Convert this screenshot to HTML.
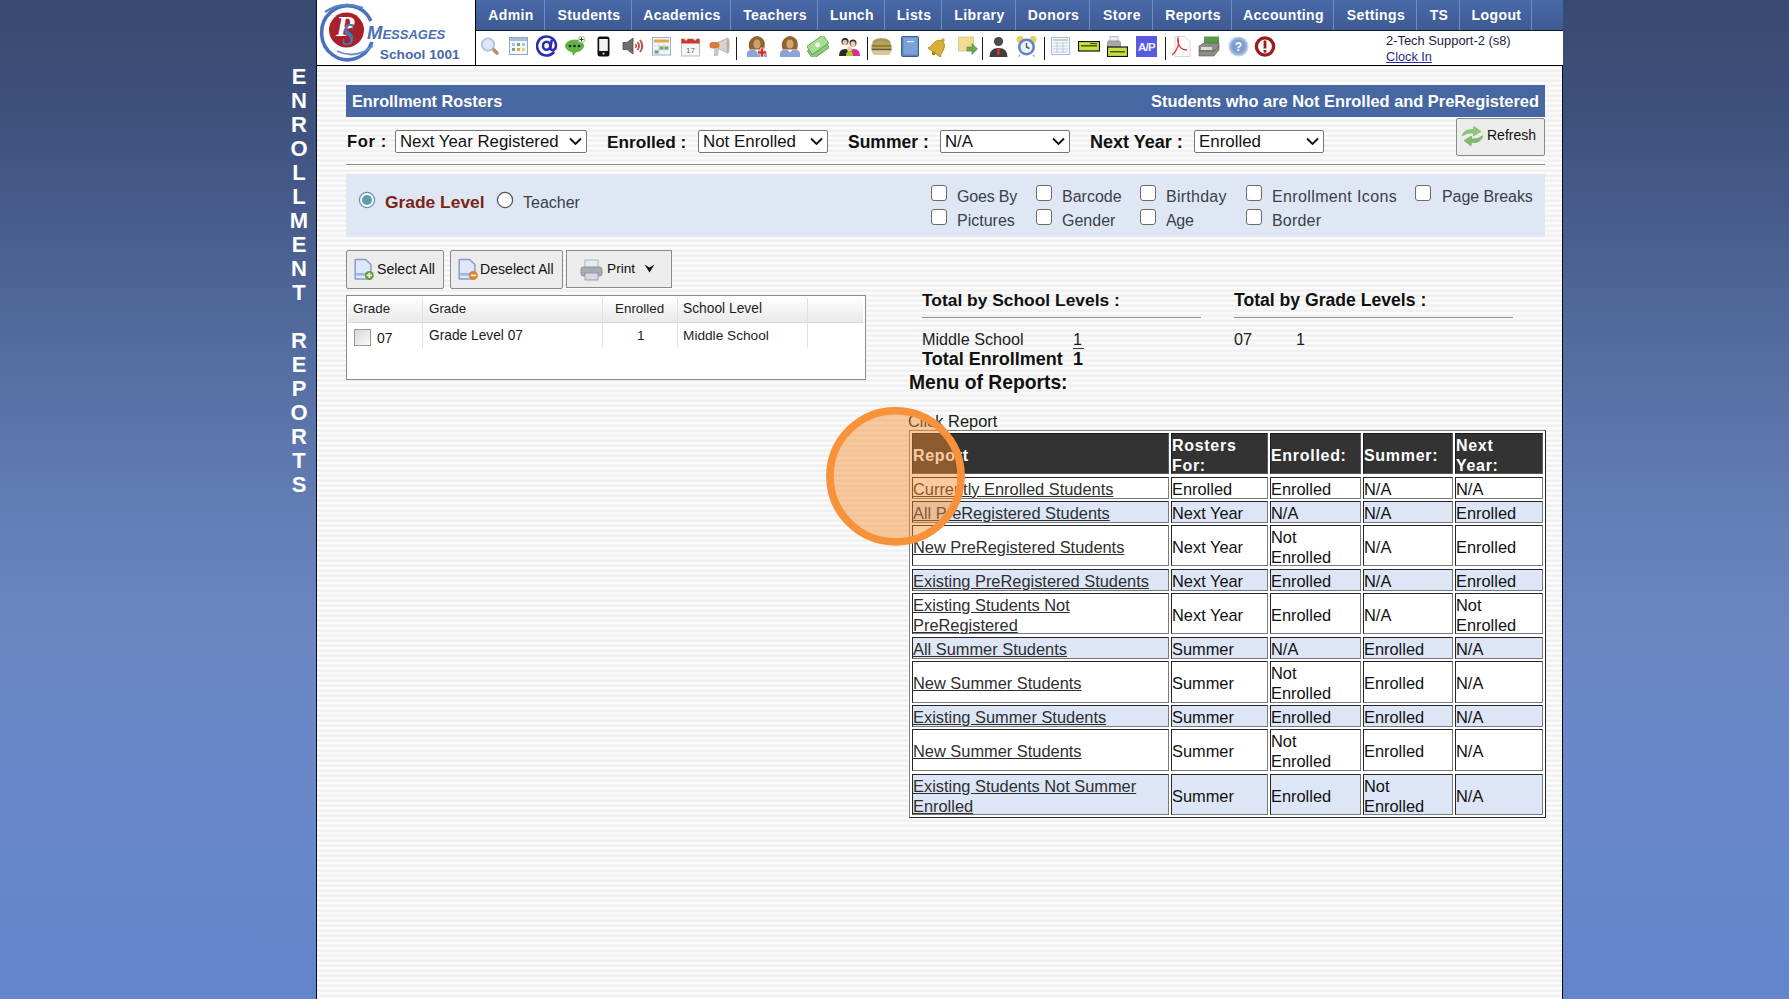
<!DOCTYPE html>
<html><head><meta charset="utf-8">
<style>
html,body{margin:0;padding:0;}
body{width:1789px;height:999px;overflow:hidden;position:relative;font-family:"Liberation Sans",sans-serif;
background:linear-gradient(to bottom,#364a72 0px,#3e527e 125px,#4a6090 250px,#5670a4 375px,#627cb4 500px,#6a86c2 625px,#6a88c8 750px,#6787cc 875px,#6383cb 999px);}
.a{position:absolute;white-space:nowrap;}
#vt{position:absolute;left:288px;top:65px;width:22px;text-align:center;color:#fff;font-weight:bold;font-size:22px;line-height:24px;}
#cont{position:absolute;left:316px;top:0;width:1245px;height:999px;border-left:1px solid #0a0a1a;border-right:1px solid #0a0a1a;
background:repeating-linear-gradient(to bottom,#efefef 0px,#f2f2f2 1.5px,#fbfbfb 2.5px,#fbfbfb 4px,#efefef 5px);}
#logo{position:absolute;left:317px;top:0;width:158px;height:65px;background:#fff;}
#hdrline{position:absolute;left:317px;top:65px;width:1245px;height:1px;background:#000;}
#nav{position:absolute;left:475px;top:0;width:1087px;height:30px;border-left:1px solid #000;
background:linear-gradient(to bottom,#4969a7 0%,#42609c 60%,#3d5a90 100%);}
#navline{position:absolute;left:475px;top:30px;width:1087px;height:1px;background:#101828;}
#icons{position:absolute;left:475px;top:31px;width:1087px;height:34px;background:#fff;border-left:1px solid #000;}
.tab{position:absolute;top:0;height:30px;line-height:30px;text-align:center;color:#fff;font-weight:bold;font-size:14px;letter-spacing:0.4px;}
.cell{box-sizing:border-box;border:1px solid;border-color:#262626 #7a7a7a #7a7a7a #262626;padding-top:2px;display:flex;align-items:center;font-size:16.4px;color:#111;line-height:20px;white-space:nowrap;}
.ci{padding-left:0;}
.lnk{color:#2e2e2e;text-decoration:underline;}
.sep{position:absolute;top:0;width:1px;height:30px;background:#6f8cc4;}
</style></head>
<body>
<div id="vt">E<br>N<br>R<br>O<br>L<br>L<br>M<br>E<br>N<br>T<br>&nbsp;<br>R<br>E<br>P<br>O<br>R<br>T<br>S</div>
<div id="cont"></div>
<div id="logo"></div>
<div id="nav"></div>
<div id="icons"></div>
<div id="navline"></div>
<div id="hdrline"></div>
<div class="tab" style="left:477px;width:68px">Admin</div>
<div class="tab" style="left:546px;width:86px">Students</div>
<div class="tab" style="left:633px;width:98px">Academics</div>
<div class="tab" style="left:732px;width:86px">Teachers</div>
<div class="tab" style="left:819px;width:66px">Lunch</div>
<div class="tab" style="left:886px;width:56px">Lists</div>
<div class="tab" style="left:943px;width:73px">Library</div>
<div class="tab" style="left:1017px;width:73px">Donors</div>
<div class="tab" style="left:1091px;width:62px">Store</div>
<div class="tab" style="left:1154px;width:78px">Reports</div>
<div class="tab" style="left:1233px;width:101px">Accounting</div>
<div class="tab" style="left:1335px;width:82px">Settings</div>
<div class="tab" style="left:1418px;width:42px">TS</div>
<div class="tab" style="left:1461px;width:71px">Logout</div>
<div class="sep" style="left:544px"></div>
<div class="sep" style="left:631px"></div>
<div class="sep" style="left:730px"></div>
<div class="sep" style="left:817px"></div>
<div class="sep" style="left:884px"></div>
<div class="sep" style="left:941px"></div>
<div class="sep" style="left:1015px"></div>
<div class="sep" style="left:1089px"></div>
<div class="sep" style="left:1152px"></div>
<div class="sep" style="left:1231px"></div>
<div class="sep" style="left:1333px"></div>
<div class="sep" style="left:1416px"></div>
<div class="sep" style="left:1459px"></div>
<div class="sep" style="left:1531px"></div>
<svg class="a" style="left:317px;top:0" width="158" height="65" viewBox="0 0 158 65">
<path d="M54,21 A26,27 0 1 0 55,42" fill="none" stroke="#4a72b8" stroke-width="3.6"/>
<path d="M8,12 Q25,0 46,8" fill="none" stroke="#5a82c4" stroke-width="2.2"/>
<path d="M20,51 Q38,60 56,46" fill="none" stroke="#6a90cc" stroke-width="1.8"/>
<circle cx="29.5" cy="30" r="17.5" fill="#a8222a"/>
<text x="19" y="36" font-family="Liberation Serif" font-style="italic" font-weight="bold" font-size="30" fill="#fff">P</text>
<text transform="translate(25.5,45) scale(0.72,1)" x="0" y="0" font-family="Liberation Serif" font-style="italic" font-weight="bold" font-size="31" fill="#4a74b8">S</text>
<text x="50" y="39.4" font-family="Liberation Sans" font-style="italic" font-weight="bold" fill="#4a70b2"><tspan font-size="18.5">M</tspan><tspan font-size="13">ESSAGES</tspan></text>
<text x="62.8" y="58.6" font-family="Liberation Sans" font-weight="bold" font-size="13.7" fill="#4a68a8">School 1001</text>
</svg>
<div class="a" style="left:1386px;top:33px;font-size:12.9px;color:#1c1c44;line-height:15px">2-Tech Support-2 (s8)</div>
<div class="a" style="left:1386px;top:50px;font-size:12.7px;color:#2828a0;line-height:15px;text-decoration:underline">Clock In</div>
<!--ICONS-->
<svg class="a" style="left:480px;top:36px" width="20" height="20" viewBox="0 0 20 20"><line x1="12" y1="12" x2="17" y2="17" stroke="#b89060" stroke-width="3.5" stroke-linecap="round"/><circle cx="8" cy="8.5" r="6.2" fill="#dbe6f6" stroke="#a9bcd8" stroke-width="1.6"/></svg>
<svg class="a" style="left:509px;top:37px" width="19" height="18" viewBox="0 0 19 18"><rect x="0.5" y="0.5" width="18" height="17" fill="#f4f7fc" stroke="#8ea6cc"/><rect x="1" y="1" width="17" height="3" fill="#a8bce0"/><rect x="3" y="6" width="3" height="3" fill="#a8c4e8"/><rect x="8" y="6" width="3" height="3" fill="#7aa860"/><rect x="13" y="6" width="3" height="3" fill="#a8c4e8"/><rect x="3" y="11" width="3" height="3" fill="#7aa860"/><rect x="8" y="11" width="3" height="3" fill="#e0a050"/><rect x="13" y="11" width="3" height="3" fill="#e8d070"/></svg>
<svg class="a" style="left:536px;top:35px" width="22" height="22" viewBox="0 0 22 22"><path d="M17.5,17.5 A9.5,9.5 0 1 1 20,10 Q20,15 16.5,15 Q14,15 14.5,12 L15.5,6" fill="none" stroke="#2c2cb4" stroke-width="2.6" stroke-linecap="round"/><ellipse cx="10.6" cy="10.8" rx="3.6" ry="4" fill="none" stroke="#2c2cb4" stroke-width="2.6"/></svg>
<svg class="a" style="left:565px;top:36px" width="21" height="20" viewBox="0 0 21 20"><ellipse cx="9.5" cy="10" rx="9.5" ry="6.5" fill="#62b244"/><path d="M7,15 L8,20 L12,15 Z" fill="#62b244"/><circle cx="5" cy="10" r="1.3" fill="#123"/><circle cx="9.5" cy="10" r="1.3" fill="#123"/><circle cx="14" cy="10" r="1.3" fill="#123"/><circle cx="16.5" cy="3.5" r="3.3" fill="#eef6ea" stroke="#8ac070" stroke-width="0.8"/><path d="M16.5,1.5 v4 M14.5,3.5 h4" stroke="#334" stroke-width="1"/></svg>
<svg class="a" style="left:597px;top:36px" width="13" height="21" viewBox="0 0 13 21"><rect x="0.5" y="0.5" width="12" height="20" rx="2.5" fill="#111"/><rect x="2.2" y="3" width="8.6" height="12" fill="#f2f2f2"/><circle cx="6.5" cy="17.6" r="1.1" fill="#ddd"/></svg>
<svg class="a" style="left:622px;top:36px" width="23" height="20" viewBox="0 0 23 20"><path d="M1,6.5 h4 l6,-4.5 v16 l-6,-4.5 h-4 z" fill="#6e6e6e" stroke="#4a4a4a" stroke-width="0.8"/><path d="M13.5,8 q1.5,2 0,4" fill="none" stroke="#c84848" stroke-width="1.6"/><path d="M15.5,6 q3,4 0,8" fill="none" stroke="#c84848" stroke-width="1.8"/><path d="M18,4 q4.5,6 0,12" fill="none" stroke="#c05050" stroke-width="2"/></svg>
<svg class="a" style="left:652px;top:37px" width="19" height="19" viewBox="0 0 19 19"><rect x="0.5" y="0.5" width="18" height="17.5" fill="#f4f8fc" stroke="#98acd4"/><rect x="2" y="2.5" width="15" height="3" fill="#f0a040"/><path d="M2,9 h15 M2,13 h15 M7,6 v11 M12,6 v11" stroke="#c8d4e4" stroke-width="0.8"/><rect x="7.5" y="9.5" width="4" height="3" fill="#6aa860"/><rect x="12.5" y="9.5" width="4" height="3" fill="#6aa860"/><rect x="2.5" y="13.5" width="4" height="3" fill="#6aa860"/></svg>
<svg class="a" style="left:681px;top:36px" width="19" height="21" viewBox="0 0 19 21"><rect x="0.5" y="3" width="18" height="17" fill="#f6f6f6" stroke="#bbb"/><rect x="0.5" y="3" width="18" height="4.5" fill="#c43a2e"/><circle cx="5" cy="3" r="1.5" fill="#eee"/><circle cx="14" cy="3" r="1.5" fill="#eee"/><text x="9.5" y="17" text-anchor="middle" font-family="Liberation Sans" font-size="8" fill="#666">17</text></svg>
<svg class="a" style="left:709px;top:36px" width="21" height="21" viewBox="0 0 21 21"><path d="M9,6.5 L19,2 L19,17 L9,12.5 Z" fill="#d8d4cc" stroke="#aaa39a" stroke-width="0.8"/><ellipse cx="19" cy="9.5" rx="1.6" ry="7.5" fill="#b8b0a4"/><rect x="0.5" y="6" width="10" height="6.5" rx="3" fill="#d87a38"/><path d="M5,12.5 l0,7.5 h4 l1,-7" fill="#c8c8c8"/></svg>
<div class="a" style="left:736px;top:37px;width:1px;height:23px;background:#1a1a1a"></div>
<svg class="a" style="left:746px;top:36px" width="22" height="21" viewBox="0 0 22 21"><path d="M1,21 L1,17.5 Q1,14 5,14 L17,14 Q21,14 21,17.5 L21,21 Z" fill="#8aa4d8"/><path d="M3.5,13.5 Q1.5,7 5,3 Q8,0 11,0 Q14,0 17,3 Q20,7 18,13.5 Z" fill="#94602c"/><ellipse cx="11" cy="8" rx="3.6" ry="4.6" fill="#c8a070"/><path d="M9,14 l2,2 l2,-2" fill="#fff"/><path d="M14.5,12 h3 v3 h3 v3 h-3 v3 h-3 v-3 h-3 v-3 h3 z" fill="#dd2a20" stroke="#fff" stroke-width="0.6"/></svg>
<svg class="a" style="left:779px;top:36px" width="22" height="21" viewBox="0 0 22 21"><path d="M1,21 L1,17.5 Q1,14 5,14 L17,14 Q21,14 21,17.5 L21,21 Z" fill="#8aa4d8"/><path d="M3.5,13.5 Q1.5,7 5,3 Q8,0 11,0 Q14,0 17,3 Q20,7 18,13.5 Z" fill="#94602c"/><ellipse cx="11" cy="8" rx="3.6" ry="4.6" fill="#d0a478"/><path d="M8.5,14 l2.5,2.5 l2.5,-2.5" fill="#fff"/></svg>
<svg class="a" style="left:807px;top:36px" width="22" height="21" viewBox="0 0 22 21"><g transform="rotate(-35 11 11)"><rect x="0" y="8" width="20" height="10" fill="#8ccc78" stroke="#5a9a48" stroke-width="0.8"/><rect x="2" y="4" width="20" height="10" fill="#a8dc90" stroke="#5a9a48" stroke-width="0.8"/><circle cx="12" cy="9" r="2.5" fill="#e8f4e0"/></g></svg>
<svg class="a" style="left:839px;top:36px" width="21" height="21" viewBox="0 0 21 21"><circle cx="6" cy="5.5" r="3.5" fill="#222"/><circle cx="14" cy="7" r="3.5" fill="#4a2a22"/><ellipse cx="6" cy="6.5" rx="2.5" ry="2.8" fill="#e8c0a0"/><ellipse cx="14" cy="8" rx="2.5" ry="2.8" fill="#f0c8b0"/><path d="M0,20 q0,-7 6,-7 q5,0 5,7 z" fill="#2a2a2a"/><path d="M9,20 q0,-7 6,-7 q6,0 6,7 z" fill="#d03090"/><circle cx="10.5" cy="13" r="2.5" fill="#e8c8a0"/><path d="M7,20 q0,-5 3.5,-5 q3.5,0 3.5,5 z" fill="#b8c820"/></svg>
<div class="a" style="left:867px;top:37px;width:1px;height:23px;background:#1a1a1a"></div>
<svg class="a" style="left:871px;top:37px" width="21" height="19" viewBox="0 0 21 19"><path d="M1,8 q0,-7 9.5,-7 q9.5,0 9.5,7 z" fill="#b8a060"/><path d="M2,5 q8.5,-4 17,0" stroke="#8a9a48" stroke-width="1" fill="none"/><rect x="0.5" y="8" width="20" height="2" fill="#7a8a38"/><rect x="0.5" y="10" width="20" height="1.4" fill="#e89050"/><rect x="0.5" y="11.4" width="20" height="2.2" fill="#6a5a30"/><path d="M1,13.6 h19 q0,4.4 -3,4.4 h-13 q-3,0 -3,-4.4 z" fill="#dcc496"/></svg>
<svg class="a" style="left:901px;top:36px" width="18" height="21" viewBox="0 0 18 21"><rect x="0.5" y="0.5" width="17" height="20" rx="1" fill="#5e84c0" stroke="#3c5c98"/><rect x="2.5" y="1.5" width="14" height="17" fill="#7ca0d8"/><rect x="6" y="5" width="7" height="1.2" fill="#e8eef8"/></svg>
<svg class="a" style="left:928px;top:36px" width="21" height="21" viewBox="0 0 21 21"><g transform="rotate(35 10.5 10.5)"><path d="M4,16 q0,-12 6.5,-12 q6.5,0 6.5,12 l2,2 h-17 z" fill="#d8b038" stroke="#b08820" stroke-width="0.8"/><circle cx="10.5" cy="2.8" r="1.8" fill="#c8a030"/><circle cx="10.5" cy="19" r="1.8" fill="#a88018"/></g></svg>
<svg class="a" style="left:958px;top:36px" width="20" height="21" viewBox="0 0 20 21"><rect x="0.5" y="1" width="15" height="14" fill="#f2dc90" stroke="#d8c090" stroke-width="0.8"/><path d="M9,11 h5 v-3.5 l5.5,5.5 l-5.5,5.5 v-3.5 h-5 z" fill="#6aaa50" stroke="#4a8a38" stroke-width="0.6"/></svg>
<div class="a" style="left:982px;top:37px;width:1px;height:23px;background:#1a1a1a"></div>
<svg class="a" style="left:989px;top:36px" width="19" height="21" viewBox="0 0 19 21"><circle cx="9.5" cy="5.5" r="4.6" fill="#4a4a4a"/><path d="M0.5,21 q0,-9 9,-9 q9,0 9,9 z" fill="#3e3e3e"/><path d="M8.3,12.5 h2.4 l0.6,5 l-1.8,2 l-1.8,-2 z" fill="#d03030"/></svg>
<svg class="a" style="left:1016px;top:36px" width="21" height="21" viewBox="0 0 21 21"><circle cx="4" cy="3.5" r="3.5" fill="#e8cc60"/><circle cx="17" cy="3.5" r="3.5" fill="#e8cc60"/><circle cx="10.5" cy="11" r="8.5" fill="#5a86c8"/><circle cx="10.5" cy="11" r="6" fill="#eef2f8"/><path d="M10.5,7 v4 l3,1.5" stroke="#555" stroke-width="1.4" fill="none"/><path d="M4,19 l-1.5,1.5 M17,19 l1.5,1.5" stroke="#999" stroke-width="1.2"/></svg>
<div class="a" style="left:1044px;top:37px;width:1px;height:23px;background:#1a1a1a"></div>
<svg class="a" style="left:1051px;top:37px" width="19" height="18" viewBox="0 0 19 18"><rect x="0.5" y="0.5" width="18" height="17" fill="#f4f7fc" stroke="#a8bce0"/><path d="M2,3 h15" stroke="#8ab870" stroke-width="1"/><path d="M2,6 h15 M2,9 h15 M2,12 h15 M2,15 h15 M6,5 v11 M12,5 v11" stroke="#b8c8e4" stroke-width="0.9"/></svg>
<svg class="a" style="left:1078px;top:41px" width="22" height="11" viewBox="0 0 22 11"><rect x="0.5" y="0.5" width="21" height="9.5" fill="#c8e040" stroke="#111" stroke-width="1.2"/><rect x="3" y="4" width="16" height="1.6" fill="#4a6010"/><rect x="12" y="2" width="7" height="1.2" fill="#4a6010"/></svg>
<svg class="a" style="left:1107px;top:36px" width="21" height="21" viewBox="0 0 21 21"><rect x="3" y="0.5" width="8" height="5" fill="#e8ecf2" stroke="#999" stroke-width="0.6"/><rect x="0.5" y="5" width="13" height="8" rx="1.5" fill="#a8aaa8" stroke="#777" stroke-width="0.6"/><rect x="0.5" y="11" width="20" height="9.5" fill="#c8e040" stroke="#111" stroke-width="1.2"/><rect x="3" y="15" width="15" height="1.5" fill="#4a6010"/></svg>
<svg class="a" style="left:1136px;top:36px" width="21" height="21" viewBox="0 0 21 21"><rect x="0" y="0" width="21" height="21" fill="#5a5adc"/><text x="10.5" y="15" text-anchor="middle" font-family="Liberation Sans" font-weight="bold" font-size="11.5" fill="#eef" letter-spacing="-0.8">A/P</text></svg>
<div class="a" style="left:1165px;top:37px;width:1px;height:23px;background:#1a1a1a"></div>
<svg class="a" style="left:1171px;top:36px" width="21" height="21" viewBox="0 0 21 21"><path d="M4,0.5 h10 l5,5 v15 h-15 z" fill="#fafafa" stroke="#ccc" stroke-width="0.8"/><path d="M1,19 q4,-3 6,-9 q1,-4 0,-8 q-1,2 1,7 q2,5 8,5" fill="none" stroke="#d04040" stroke-width="1.3"/></svg>
<svg class="a" style="left:1198px;top:36px" width="22" height="21" viewBox="0 0 22 21"><path d="M6,0.5 h15 v7 l-6,4 h-9 z" fill="#5a9a40"/><path d="M1,10 l5,-3 h15 v7 l-5,6 h-15 z" fill="#8a8e8a" stroke="#555" stroke-width="0.6"/><rect x="3" y="11" width="11" height="3" fill="#d8e0c8"/><path d="M1,15 h15 l5,-5" stroke="#555" stroke-width="0.7" fill="none"/></svg>
<svg class="a" style="left:1228px;top:36px" width="21" height="21" viewBox="0 0 21 21"><circle cx="10.5" cy="10.5" r="9.5" fill="#9ab4dc" stroke="#c8d6ec" stroke-width="1.2"/><circle cx="10.5" cy="10.5" r="7" fill="#7e9cd0"/><text x="10.5" y="15" text-anchor="middle" font-family="Liberation Sans" font-weight="bold" font-size="12" fill="#fff">?</text></svg>
<svg class="a" style="left:1254px;top:36px" width="22" height="21" viewBox="0 0 22 21"><circle cx="11" cy="10.5" r="8.6" fill="#fff" stroke="#9a1e1e" stroke-width="3.4"/><rect x="9.6" y="4.5" width="2.8" height="8" fill="#9a1e1e"/><rect x="9.6" y="14" width="2.8" height="2.6" fill="#9a1e1e"/></svg>
<!--/ICONS-->
<!--NAV-->
<!--CONTENT-->
<div class="a" style="left:346px;top:85px;width:1199px;height:31.5px;background:#4667a2"></div>
<div class="a" style="left:352px;top:86px;font-size:16.3px;font-weight:bold;color:#fff;line-height:31px">Enrollment Rosters</div>
<div class="a" style="left:1000px;top:86px;width:539px;height:31px;text-align:right;font-size:16.4px;font-weight:bold;color:#fff;line-height:31px">Students who are Not Enrolled and PreRegistered</div>
<div class="a" style="left:347px;top:131px;font-size:16.6px;font-weight:bold;color:#111;line-height:22px;letter-spacing:0.6px">For :</div>
<div class="a" style="left:395px;top:130px;width:192px;height:23px;background:#fff;border:1px solid #767676;border-radius:2px;box-sizing:border-box"><span style="position:absolute;left:4px;top:0;line-height:21px;font-size:16.8px;color:#111">Next Year Registered</span><svg width="13" height="9" viewBox="0 0 13 9" style="position:absolute;right:4px;top:6px"><path d="M1,1.5 L6.5,7 L12,1.5" fill="none" stroke="#111" stroke-width="1.9"/></svg></div>
<div class="a" style="left:607px;top:131px;font-size:17.2px;font-weight:bold;color:#111;line-height:22px;letter-spacing:0px">Enrolled :</div>
<div class="a" style="left:698px;top:130px;width:130px;height:23px;background:#fff;border:1px solid #767676;border-radius:2px;box-sizing:border-box"><span style="position:absolute;left:4px;top:0;line-height:21px;font-size:16.9px;color:#111">Not Enrolled</span><svg width="13" height="9" viewBox="0 0 13 9" style="position:absolute;right:4px;top:6px"><path d="M1,1.5 L6.5,7 L12,1.5" fill="none" stroke="#111" stroke-width="1.9"/></svg></div>
<div class="a" style="left:848px;top:131px;font-size:17.5px;font-weight:bold;color:#111;line-height:22px;letter-spacing:0px">Summer :</div>
<div class="a" style="left:940px;top:130px;width:130px;height:23px;background:#fff;border:1px solid #767676;border-radius:2px;box-sizing:border-box"><span style="position:absolute;left:4px;top:0;line-height:21px;font-size:16.8px;color:#111">N/A</span><svg width="13" height="9" viewBox="0 0 13 9" style="position:absolute;right:4px;top:6px"><path d="M1,1.5 L6.5,7 L12,1.5" fill="none" stroke="#111" stroke-width="1.9"/></svg></div>
<div class="a" style="left:1090px;top:131px;font-size:18px;font-weight:bold;color:#111;line-height:22px;letter-spacing:0px">Next Year :</div>
<div class="a" style="left:1194px;top:130px;width:130px;height:23px;background:#fff;border:1px solid #767676;border-radius:2px;box-sizing:border-box"><span style="position:absolute;left:4px;top:0;line-height:21px;font-size:16.9px;color:#111">Enrolled</span><svg width="13" height="9" viewBox="0 0 13 9" style="position:absolute;right:4px;top:6px"><path d="M1,1.5 L6.5,7 L12,1.5" fill="none" stroke="#111" stroke-width="1.9"/></svg></div>
<div class="a" style="left:1456px;top:118px;width:89px;height:38px;box-sizing:border-box;background:#ececec;border:1px solid #8a8a8a;border-radius:2px"></div>
<svg class="a" style="left:1461px;top:125px" width="23" height="22" viewBox="0 0 23 22"><path d="M1,11 Q3,3.5 12.5,4.5 L13,1.5 L20,6.5 L12.5,11 L12.5,8 Q6,7.5 1,11 Z" fill="#8cc878" stroke="#76b060" stroke-width="0.6"/><path d="M22,10.5 Q20,18.5 10.5,17.5 L10,21 L3,15.5 L10.5,11 L10.5,14 Q17,14.5 22,10.5 Z" fill="#80bc6c" stroke="#6aa858" stroke-width="0.6"/></svg>
<div class="a" style="left:1487px;top:126px;font-size:14px;color:#111;line-height:18px">Refresh</div>
<div class="a" style="left:346px;top:164px;width:1199px;height:1px;background:#8c8c8c"></div>
<div class="a" style="left:346px;top:165px;width:1199px;height:1px;background:#fff"></div>
<div class="a" style="left:346px;top:174px;width:1199px;height:63px;background:#dfe7f5"></div>
<svg class="a" style="left:358px;top:191px" width="18" height="18" viewBox="0 0 18 18"><circle cx="9" cy="9" r="7.6" fill="#fff" stroke="#5a9aa8" stroke-width="1.3"/><circle cx="9" cy="9" r="5" fill="#5e9ea8"/></svg>
<div class="a" style="left:385px;top:191px;font-size:17.4px;font-weight:bold;color:#7a2414;line-height:22px">Grade Level</div>
<svg class="a" style="left:496px;top:191px" width="18" height="18" viewBox="0 0 18 18"><circle cx="9" cy="9" r="7.6" fill="#fff" stroke="#555" stroke-width="1.3"/></svg>
<div class="a" style="left:523px;top:192px;font-size:16px;color:#3a404a;line-height:22px">Teacher</div>
<div class="a" style="left:931px;top:185px;width:16px;height:16px;box-sizing:border-box;background:#fff;border:1.3px solid #6a6a6a;border-radius:3px"></div>
<div class="a" style="left:957px;top:186px;font-size:16px;letter-spacing:-0.2px;color:#3a404a;line-height:22px">Goes By</div>
<div class="a" style="left:931px;top:209px;width:16px;height:16px;box-sizing:border-box;background:#fff;border:1.3px solid #6a6a6a;border-radius:3px"></div>
<div class="a" style="left:957px;top:210px;font-size:16px;letter-spacing:0px;color:#3a404a;line-height:22px">Pictures</div>
<div class="a" style="left:1036px;top:185px;width:16px;height:16px;box-sizing:border-box;background:#fff;border:1.3px solid #6a6a6a;border-radius:3px"></div>
<div class="a" style="left:1062px;top:186px;font-size:16px;letter-spacing:0px;color:#3a404a;line-height:22px">Barcode</div>
<div class="a" style="left:1036px;top:209px;width:16px;height:16px;box-sizing:border-box;background:#fff;border:1.3px solid #6a6a6a;border-radius:3px"></div>
<div class="a" style="left:1062px;top:210px;font-size:16px;letter-spacing:0px;color:#3a404a;line-height:22px">Gender</div>
<div class="a" style="left:1140px;top:185px;width:16px;height:16px;box-sizing:border-box;background:#fff;border:1.3px solid #6a6a6a;border-radius:3px"></div>
<div class="a" style="left:1166px;top:186px;font-size:16px;letter-spacing:0.26px;color:#3a404a;line-height:22px">Birthday</div>
<div class="a" style="left:1140px;top:209px;width:16px;height:16px;box-sizing:border-box;background:#fff;border:1.3px solid #6a6a6a;border-radius:3px"></div>
<div class="a" style="left:1166px;top:210px;font-size:16px;letter-spacing:-0.3px;color:#3a404a;line-height:22px">Age</div>
<div class="a" style="left:1246px;top:185px;width:16px;height:16px;box-sizing:border-box;background:#fff;border:1.3px solid #6a6a6a;border-radius:3px"></div>
<div class="a" style="left:1272px;top:186px;font-size:16px;letter-spacing:0.37px;color:#3a404a;line-height:22px">Enrollment Icons</div>
<div class="a" style="left:1246px;top:209px;width:16px;height:16px;box-sizing:border-box;background:#fff;border:1.3px solid #6a6a6a;border-radius:3px"></div>
<div class="a" style="left:1272px;top:210px;font-size:16px;letter-spacing:0.2px;color:#3a404a;line-height:22px">Border</div>
<div class="a" style="left:1415px;top:185px;width:16px;height:16px;box-sizing:border-box;background:#fff;border:1.3px solid #6a6a6a;border-radius:3px"></div>
<div class="a" style="left:1442px;top:186px;font-size:16px;letter-spacing:-0.08px;color:#3a404a;line-height:22px">Page Breaks</div>
<div class="a" style="left:346px;top:250px;width:98px;height:39px;box-sizing:border-box;background:#ececec;border:1px solid #8a8a8a;border-radius:2px"></div>
<div class="a" style="left:450px;top:250px;width:113px;height:39px;box-sizing:border-box;background:#ececec;border:1px solid #8a8a8a;border-radius:2px"></div>
<div class="a" style="left:566px;top:250px;width:106px;height:38px;box-sizing:border-box;background:#ececec;border:1px solid #8a8a8a;border-radius:0px"></div>
<svg class="a" style="left:353px;top:258px" width="22" height="23" viewBox="0 0 22 23"><path d="M2.2,1.5 h10.5 l5.3,5.3 v14.2 h-15.8 z" fill="#dde6fa" stroke="#8a9cc8" stroke-width="1.5" stroke-linejoin="round"/><rect x="3.2" y="15" width="11" height="2.6" fill="#9ab8e0"/><circle cx="16.3" cy="17.4" r="4.5" fill="#6a9a3a"/><path d="M13.6,17.4 h5.4 M16.3,14.7 v5.4" stroke="#e8f4e0" stroke-width="1.7"/></svg>
<svg class="a" style="left:457px;top:258px" width="22" height="23" viewBox="0 0 22 23"><path d="M2.2,1.5 h10.5 l5.3,5.3 v14.2 h-15.8 z" fill="#dde6fa" stroke="#8a9cc8" stroke-width="1.5" stroke-linejoin="round"/><rect x="3.2" y="15" width="11" height="2.6" fill="#9ab8e0"/><circle cx="16.3" cy="17.4" r="4.5" fill="#e0822a"/><path d="M13.6,17.4 h5.4" stroke="#e8f4e0" stroke-width="1.7"/></svg>
<div class="a" style="left:377px;top:259.5px;font-size:14.1px;color:#111;line-height:18px">Select All</div>
<div class="a" style="left:480px;top:259.5px;font-size:14.1px;color:#111;line-height:18px">Deselect All</div>
<svg class="a" style="left:580px;top:259px" width="23" height="22" viewBox="0 0 23 22"><rect x="5" y="1" width="13" height="8" fill="#e4ecf6" stroke="#9aa" stroke-width="0.8"/><rect x="1" y="8" width="21" height="9" rx="2.5" fill="#a8acb0" stroke="#80868c" stroke-width="0.8"/><rect x="5" y="14" width="13" height="7" fill="#d4dae2" stroke="#8a9096" stroke-width="0.8"/></svg>
<div class="a" style="left:607px;top:259.5px;font-size:13.7px;color:#111;line-height:18px">Print</div>
<svg class="a" style="left:644px;top:264px" width="11" height="9" viewBox="0 0 11 9"><path d="M0.5,0.5 L5.5,3.5 L10.5,0.5 L5.5,8.5 Z" fill="#111"/></svg>
<div class="a" style="left:346px;top:295px;width:520px;height:85px;box-sizing:border-box;background:#fff;border:1px solid #8a8a8a"></div>
<div class="a" style="left:348px;top:297px;width:515px;height:25px;background:linear-gradient(to bottom,#fff,#e9e9e9);border-bottom:1px solid #d8d8d8"></div>
<div class="a" style="left:422px;top:298px;width:1px;height:50px;background:#e0e0e0"></div>
<div class="a" style="left:602px;top:298px;width:1px;height:50px;background:#e0e0e0"></div>
<div class="a" style="left:677px;top:298px;width:1px;height:50px;background:#e0e0e0"></div>
<div class="a" style="left:807px;top:298px;width:1px;height:50px;background:#e0e0e0"></div>
<div class="a" style="left:353px;top:301px;font-size:13.4px;color:#1c1c1c;line-height:16px">Grade</div>
<div class="a" style="left:429px;top:301px;font-size:13.4px;color:#1c1c1c;line-height:16px">Grade</div>
<div class="a" style="left:615px;top:301px;font-size:13.4px;color:#1c1c1c;line-height:16px">Enrolled</div>
<div class="a" style="left:683px;top:301px;font-size:13.8px;color:#1c1c1c;line-height:16px">School Level</div>
<div class="a" style="left:354px;top:329px;width:17px;height:17px;box-sizing:border-box;border:1px solid #9a9a9a;background:linear-gradient(135deg,#d8d8d8,#fafafa)"></div>
<div class="a" style="left:377px;top:330px;font-size:14px;color:#1c1c1c;line-height:16px">07</div>
<div class="a" style="left:429px;top:328px;font-size:13.75px;color:#1c1c1c;line-height:16px">Grade Level 07</div>
<div class="a" style="left:637px;top:328px;font-size:13.7px;color:#1c1c1c;line-height:16px">1</div>
<div class="a" style="left:683px;top:328px;font-size:13.66px;color:#1c1c1c;line-height:16px">Middle School</div>
<div class="a" style="left:922px;top:290px;font-size:17.4px;font-weight:bold;color:#111;line-height:20px">Total by School Levels :</div>
<div class="a" style="left:922px;top:317px;width:279px;height:1px;background:#909090"></div>
<div class="a" style="left:922px;top:329px;font-size:16.2px;color:#1c1c1c;line-height:20px">Middle School</div>
<div class="a" style="left:1073px;top:329px;font-size:16.2px;color:#1c1c1c;line-height:20px">1</div>
<div class="a" style="left:1073px;top:348px;width:11px;height:1px;background:#333"></div>
<div class="a" style="left:922px;top:349px;font-size:18px;font-weight:bold;color:#111;line-height:20px">Total Enrollment</div>
<div class="a" style="left:1073px;top:349px;font-size:18px;font-weight:bold;color:#111;line-height:20px">1</div>
<div class="a" style="left:909px;top:372px;font-size:19.3px;font-weight:bold;color:#111;line-height:22px">Menu of Reports:</div>
<div class="a" style="left:1234px;top:290px;font-size:17.6px;font-weight:bold;color:#111;line-height:20px">Total by Grade Levels :</div>
<div class="a" style="left:1234px;top:317px;width:279px;height:1px;background:#909090"></div>
<div class="a" style="left:1234px;top:329px;font-size:16.2px;color:#1c1c1c;line-height:20px">07</div>
<div class="a" style="left:1296px;top:329px;font-size:16.2px;color:#1c1c1c;line-height:20px">1</div>
<div class="a" style="left:908px;top:411px;font-size:16.4px;color:#1c1c1c;line-height:20px">Click Report</div>
<div class="a" style="left:909px;top:430px;width:637px;height:388px;box-sizing:border-box;background:#fff;border:1px solid #808080;border-right-color:#222;border-bottom-color:#222"></div>
<div class="a cell" style="left:912px;top:433px;width:257px;height:41px;background:#333;color:#fff;font-size:16px;letter-spacing:0.7px;border-color:#1c1c1c #5a5a5a #5a5a5a #1c1c1c;padding-top:4px"><div class="ci"><b>Report</b></div></div>
<div class="a cell" style="left:1171px;top:433px;width:97px;height:41px;background:#333;color:#fff;font-size:16px;letter-spacing:0.7px;border-color:#1c1c1c #5a5a5a #5a5a5a #1c1c1c;padding-top:4px"><div class="ci"><b>Rosters<br>For:</b></div></div>
<div class="a cell" style="left:1270px;top:433px;width:91px;height:41px;background:#333;color:#fff;font-size:16px;letter-spacing:0.7px;border-color:#1c1c1c #5a5a5a #5a5a5a #1c1c1c;padding-top:4px"><div class="ci"><b>Enrolled:</b></div></div>
<div class="a cell" style="left:1363px;top:433px;width:90px;height:41px;background:#333;color:#fff;font-size:16px;letter-spacing:0.7px;border-color:#1c1c1c #5a5a5a #5a5a5a #1c1c1c;padding-top:4px"><div class="ci"><b>Summer:</b></div></div>
<div class="a cell" style="left:1455px;top:433px;width:88px;height:41px;background:#333;color:#fff;font-size:16px;letter-spacing:0.7px;border-color:#1c1c1c #5a5a5a #5a5a5a #1c1c1c;padding-top:4px"><div class="ci"><b>Next<br>Year:</b></div></div>
<div class="a cell" style="left:912px;top:477px;width:257px;height:22px;background:#fff;"><div class="ci"><span class="lnk">Currently Enrolled Students</span></div></div>
<div class="a cell" style="left:1171px;top:477px;width:97px;height:22px;background:#fff;"><div class="ci">Enrolled</div></div>
<div class="a cell" style="left:1270px;top:477px;width:91px;height:22px;background:#fff;"><div class="ci">Enrolled</div></div>
<div class="a cell" style="left:1363px;top:477px;width:90px;height:22px;background:#fff;"><div class="ci">N/A</div></div>
<div class="a cell" style="left:1455px;top:477px;width:88px;height:22px;background:#fff;"><div class="ci">N/A</div></div>
<div class="a cell" style="left:912px;top:501px;width:257px;height:22px;background:#dde6f6;"><div class="ci"><span class="lnk">All PreRegistered Students</span></div></div>
<div class="a cell" style="left:1171px;top:501px;width:97px;height:22px;background:#dde6f6;"><div class="ci">Next Year</div></div>
<div class="a cell" style="left:1270px;top:501px;width:91px;height:22px;background:#dde6f6;"><div class="ci">N/A</div></div>
<div class="a cell" style="left:1363px;top:501px;width:90px;height:22px;background:#dde6f6;"><div class="ci">N/A</div></div>
<div class="a cell" style="left:1455px;top:501px;width:88px;height:22px;background:#dde6f6;"><div class="ci">Enrolled</div></div>
<div class="a cell" style="left:912px;top:525px;width:257px;height:41px;background:#fff;"><div class="ci"><span class="lnk">New PreRegistered Students</span></div></div>
<div class="a cell" style="left:1171px;top:525px;width:97px;height:41px;background:#fff;"><div class="ci">Next Year</div></div>
<div class="a cell" style="left:1270px;top:525px;width:91px;height:41px;background:#fff;"><div class="ci">Not<br>Enrolled</div></div>
<div class="a cell" style="left:1363px;top:525px;width:90px;height:41px;background:#fff;"><div class="ci">N/A</div></div>
<div class="a cell" style="left:1455px;top:525px;width:88px;height:41px;background:#fff;"><div class="ci">Enrolled</div></div>
<div class="a cell" style="left:912px;top:569px;width:257px;height:22px;background:#dde6f6;"><div class="ci"><span class="lnk">Existing PreRegistered Students</span></div></div>
<div class="a cell" style="left:1171px;top:569px;width:97px;height:22px;background:#dde6f6;"><div class="ci">Next Year</div></div>
<div class="a cell" style="left:1270px;top:569px;width:91px;height:22px;background:#dde6f6;"><div class="ci">Enrolled</div></div>
<div class="a cell" style="left:1363px;top:569px;width:90px;height:22px;background:#dde6f6;"><div class="ci">N/A</div></div>
<div class="a cell" style="left:1455px;top:569px;width:88px;height:22px;background:#dde6f6;"><div class="ci">Enrolled</div></div>
<div class="a cell" style="left:912px;top:593px;width:257px;height:41px;background:#fff;"><div class="ci"><span class="lnk">Existing Students Not<br>PreRegistered</span></div></div>
<div class="a cell" style="left:1171px;top:593px;width:97px;height:41px;background:#fff;"><div class="ci">Next Year</div></div>
<div class="a cell" style="left:1270px;top:593px;width:91px;height:41px;background:#fff;"><div class="ci">Enrolled</div></div>
<div class="a cell" style="left:1363px;top:593px;width:90px;height:41px;background:#fff;"><div class="ci">N/A</div></div>
<div class="a cell" style="left:1455px;top:593px;width:88px;height:41px;background:#fff;"><div class="ci">Not<br>Enrolled</div></div>
<div class="a cell" style="left:912px;top:637px;width:257px;height:22px;background:#dde6f6;"><div class="ci"><span class="lnk">All Summer Students</span></div></div>
<div class="a cell" style="left:1171px;top:637px;width:97px;height:22px;background:#dde6f6;"><div class="ci">Summer</div></div>
<div class="a cell" style="left:1270px;top:637px;width:91px;height:22px;background:#dde6f6;"><div class="ci">N/A</div></div>
<div class="a cell" style="left:1363px;top:637px;width:90px;height:22px;background:#dde6f6;"><div class="ci">Enrolled</div></div>
<div class="a cell" style="left:1455px;top:637px;width:88px;height:22px;background:#dde6f6;"><div class="ci">N/A</div></div>
<div class="a cell" style="left:912px;top:661px;width:257px;height:42px;background:#fff;"><div class="ci"><span class="lnk">New Summer Students</span></div></div>
<div class="a cell" style="left:1171px;top:661px;width:97px;height:42px;background:#fff;"><div class="ci">Summer</div></div>
<div class="a cell" style="left:1270px;top:661px;width:91px;height:42px;background:#fff;"><div class="ci">Not<br>Enrolled</div></div>
<div class="a cell" style="left:1363px;top:661px;width:90px;height:42px;background:#fff;"><div class="ci">Enrolled</div></div>
<div class="a cell" style="left:1455px;top:661px;width:88px;height:42px;background:#fff;"><div class="ci">N/A</div></div>
<div class="a cell" style="left:912px;top:705px;width:257px;height:22px;background:#dde6f6;"><div class="ci"><span class="lnk">Existing Summer Students</span></div></div>
<div class="a cell" style="left:1171px;top:705px;width:97px;height:22px;background:#dde6f6;"><div class="ci">Summer</div></div>
<div class="a cell" style="left:1270px;top:705px;width:91px;height:22px;background:#dde6f6;"><div class="ci">Enrolled</div></div>
<div class="a cell" style="left:1363px;top:705px;width:90px;height:22px;background:#dde6f6;"><div class="ci">Enrolled</div></div>
<div class="a cell" style="left:1455px;top:705px;width:88px;height:22px;background:#dde6f6;"><div class="ci">N/A</div></div>
<div class="a cell" style="left:912px;top:729px;width:257px;height:42px;background:#fff;"><div class="ci"><span class="lnk">New Summer Students</span></div></div>
<div class="a cell" style="left:1171px;top:729px;width:97px;height:42px;background:#fff;"><div class="ci">Summer</div></div>
<div class="a cell" style="left:1270px;top:729px;width:91px;height:42px;background:#fff;"><div class="ci">Not<br>Enrolled</div></div>
<div class="a cell" style="left:1363px;top:729px;width:90px;height:42px;background:#fff;"><div class="ci">Enrolled</div></div>
<div class="a cell" style="left:1455px;top:729px;width:88px;height:42px;background:#fff;"><div class="ci">N/A</div></div>
<div class="a cell" style="left:912px;top:774px;width:257px;height:41px;background:#dde6f6;"><div class="ci"><span class="lnk">Existing Students Not Summer<br>Enrolled</span></div></div>
<div class="a cell" style="left:1171px;top:774px;width:97px;height:41px;background:#dde6f6;"><div class="ci">Summer</div></div>
<div class="a cell" style="left:1270px;top:774px;width:91px;height:41px;background:#dde6f6;"><div class="ci">Enrolled</div></div>
<div class="a cell" style="left:1363px;top:774px;width:90px;height:41px;background:#dde6f6;"><div class="ci">Not<br>Enrolled</div></div>
<div class="a cell" style="left:1455px;top:774px;width:88px;height:41px;background:#dde6f6;"><div class="ci">N/A</div></div>
<!--/CONTENT-->
<!--CIRCLE--><svg class="a" style="left:825px;top:406px" width="141" height="141" viewBox="0 0 141 141"><circle cx="70.5" cy="70.3" r="65.6" fill="rgba(246,139,44,0.45)" stroke="#f7913a" stroke-width="7.6"/></svg><!--/CIRCLE-->
</body></html>
